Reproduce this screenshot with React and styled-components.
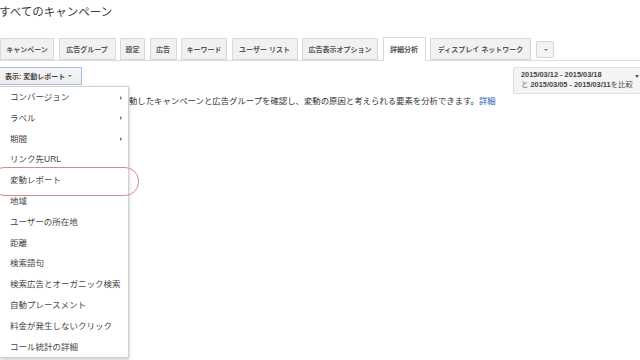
import React from "react";
import styled, { createGlobalStyle } from "styled-components";

const tabs = [
  { label: "キャンペーン", w: 54 },
  { label: "広告グループ", w: 57 },
  { label: "設定", w: 25 },
  { label: "広告", w: 27 },
  { label: "キーワード", w: 46 },
  { label: "ユーザー リスト", w: 66 },
  { label: "広告表示オプション", w: 76 },
  { label: "詳細分析", w: 43, active: true },
  { label: "ディスプレイ ネットワーク", w: 101 },
];

const menuItems = [
  { label: "コンバージョン", sub: true },
  { label: "ラベル", sub: true },
  { label: "期間", sub: true },
  { label: "リンク先URL" },
  { label: "変動レポート", marked: true },
  { label: "地域" },
  { label: "ユーザーの所在地" },
  { label: "距離" },
  { label: "検索語句" },
  { label: "検索広告とオーガニック検索" },
  { label: "自動プレースメント" },
  { label: "料金が発生しないクリック" },
  { label: "コール統計の詳細" },
];

const App = () => {
  return (
    <Page>
      <GlobalStyle />
      <Title>すべてのキャンペーン</Title>
      <TabBar>
        {tabs.map((t) => (
          <Tab key={t.label} $w={t.w} $active={t.active}>
            {t.label}
          </Tab>
        ))}
        <MoreButton>
          <Caret />
        </MoreButton>
      </TabBar>
      <Toolbar>
        <ViewPicker>
          <ViewButton>
            表示: 変動レポート <Caret />
          </ViewButton>
          <Menu>
            {menuItems.map((m) => (
              <MenuItem key={m.label}>
                {m.label}
                {m.sub && <SubArrow />}
                {m.marked && <Mark />}
              </MenuItem>
            ))}
          </Menu>
        </ViewPicker>
        <DateBox>
          <div>
            <b>2015/03/12 - 2015/03/18</b>
          </div>
          <div>
            と <b>2015/03/05 - 2015/03/11</b>を比較
          </div>
          <DateCaret />
        </DateBox>
      </Toolbar>
      <Description>
        動したキャンペーンと広告グループを確認し、変動の原因と考えられる要素を分析できます。
        <a href="#">詳細</a>
      </Description>
    </Page>
  );
};

const GlobalStyle = createGlobalStyle`
  html, body {
    margin: 0;
    background: #fff;
    overflow: hidden;
  }
  body {
    font-family: "Liberation Sans", "Noto Sans CJK JP", sans-serif;
  }
`;

const Page = styled.div`
  width: 645px;
  height: 360px;
  color: #333;
`;

const Title = styled.h1`
  margin: 0 0 13px -1px;
  font-size: 11.5px;
  font-weight: normal;
  line-height: 24px;
  color: #3a3a3a;
`;

const TabBar = styled.div`
  display: flex;
  align-items: flex-end;
  gap: 4.5px;
  height: 23px;
  border-bottom: 1px solid #dcdcdc;
`;

const Tab = styled.div`
  box-sizing: border-box;
  width: ${(p) => p.$w}px;
  height: ${(p) => (p.$active ? 24 : 22)}px;
  margin-bottom: ${(p) => (p.$active ? -1 : 0)}px;
  display: flex;
  align-items: center;
  justify-content: center;
  padding-bottom: ${(p) => (p.$active ? 1 : 0)}px;
  background: ${(p) => (p.$active ? "#fff" : "#f1f1f1")};
  border: 1px solid #d9d9d9;
  border-bottom: ${(p) => (p.$active ? "none" : "1px solid #d9d9d9")};
  font-size: 7px;
  font-weight: bold;
  color: #555;
  white-space: nowrap;
`;

const MoreButton = styled.div`
  box-sizing: border-box;
  width: 18px;
  height: 17px;
  margin: 0 0 2px 0;
  display: flex;
  align-items: center;
  justify-content: center;
  background: #f3f3f3;
  border: 1px solid #d6d6d6;
  border-radius: 2px;
`;

const Caret = styled.span`
  display: inline-block;
  width: 0;
  height: 0;
  border-left: 2px solid transparent;
  border-right: 2px solid transparent;
  border-top: 2.5px solid #777;
  vertical-align: middle;
  margin-left: 3px;
`;

const Toolbar = styled.div`
  display: flex;
  justify-content: space-between;
  align-items: flex-start;
  margin-top: 6px;
  height: 27px;
`;

const ViewPicker = styled.div`
  position: relative;
  z-index: 2;
`;

const ViewButton = styled.div`
  box-sizing: border-box;
  width: 82px;
  height: 18px;
  display: flex;
  align-items: center;
  padding-left: 5px;
  background: linear-gradient(#f6f6f6, #ececec);
  border: 1px solid #a8c0e4;
  border-left: none;
  font-size: 7px;
  font-weight: bold;
  color: #444;
  white-space: nowrap;
`;

const Menu = styled.div`
  position: absolute;
  top: 19px;
  left: 0;
  box-sizing: border-box;
  width: 129px;
  height: 272px;
  background: #fff;
  border: 1px solid #cfcfcf;
  border-left: none;
  box-shadow: 0 2px 4px rgba(0, 0, 0, 0.2);
`;

const MenuItem = styled.div`
  position: relative;
  height: 20.8px;
  line-height: 20.8px;
  padding-left: 10px;
  font-size: 8.5px;
  color: #444;
  white-space: nowrap;
`;

const SubArrow = styled.span`
  position: absolute;
  right: 6px;
  top: 8.5px;
  width: 0;
  height: 0;
  border-top: 2px solid transparent;
  border-bottom: 2px solid transparent;
  border-left: 2.5px solid #777;
`;

const Mark = styled.span`
  position: absolute;
  left: -10px;
  top: -3px;
  width: 147px;
  height: 27px;
  border: 1px solid #e08686;
  border-radius: 14px;
`;

const DateBox = styled.div`
  position: relative;
  box-sizing: border-box;
  width: 132px;
  height: 27px;
  padding: 2px 0 0 7px;
  background: #f4f4f4;
  border: 1px solid #dedede;
  border-radius: 2px;
  font-size: 7.4px;
  line-height: 10px;
  color: #555;
  white-space: nowrap;

  b {
    color: #444;
  }
`;

const DateCaret = styled.span`
  position: absolute;
  left: 121px;
  top: 7px;
  width: 0;
  height: 0;
  border-left: 2.5px solid transparent;
  border-right: 2.5px solid transparent;
  border-top: 3px solid #555;
`;

const Description = styled.p`
  margin: 0;
  padding-left: 129px;
  font-size: 8.4px;
  line-height: 14px;
  color: #333;
  white-space: nowrap;

  a {
    color: #2a5db0;
    text-decoration: none;
  }
`;

export default App;
